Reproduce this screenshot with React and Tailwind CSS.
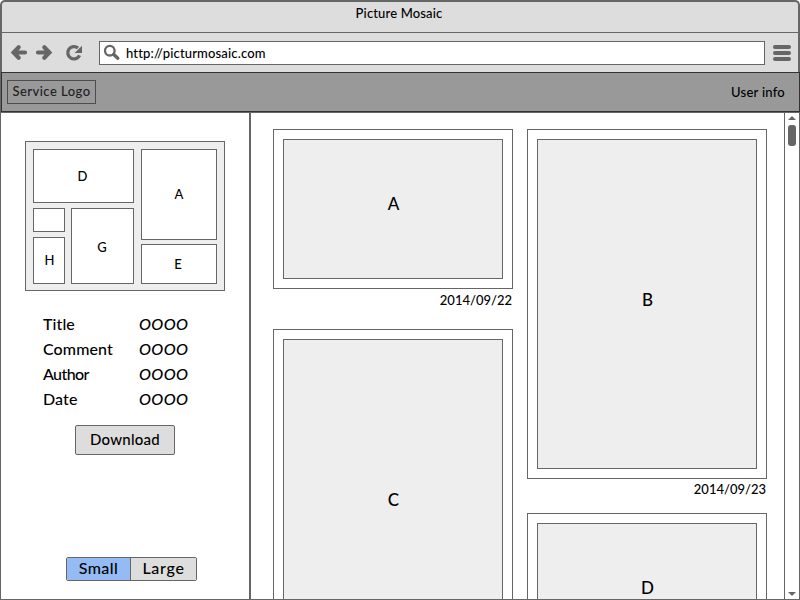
function Toolbar() {
  return (
    <div className="flex h-[39px] items-start bg-[#ddd] pt-2">
      <svg className="mt-[2px] ml-[8px] h-[20px] w-[76px] shrink-0" viewBox="0 0 76 20" fill="none" stroke="#666">
        <path d="M3.5 9.5H15M8.7 4.2L3.6 9.5L8.7 14.8" strokeWidth="4.2" strokeLinecap="round" strokeLinejoin="miter" />
        <path d="M28 9.5H39.5M34.3 4.2L39.4 9.5L34.3 14.8" strokeWidth="4.2" strokeLinecap="round" strokeLinejoin="miter" />
        <path d="M68 5A6.2 6.2 0 1 0 69.6 12.4" strokeWidth="3.3" />
        <path d="M72 2.8V10H64.6Z" fill="#666" stroke="none" />
      </svg>
      <div className="ml-[13px] flex h-6 w-[666px] shrink-0 items-center border border-[#666] bg-white">
        <svg className="ml-[3px] h-[18px] w-[18px]" viewBox="0 0 18 18" fill="none" stroke="#666">
          <circle cx="6.8" cy="6.7" r="4.8" strokeWidth="2.3" />
          <path d="M10.8 10.4L14.8 14.2" strokeWidth="3.4" strokeLinecap="round" />
        </svg>
        <span className="ml-[5px] text-[13px] leading-none font-medium tracking-[0.15px]">http://picturmosaic.com</span>
      </div>
      <div className="mt-[4px] ml-[8px] flex w-[18px] flex-col gap-[2px]">
        <div className="h-1 rounded-full bg-[#666]" />
        <div className="h-1 rounded-full bg-[#666]" />
        <div className="h-1 rounded-full bg-[#666]" />
      </div>
    </div>
  );
}

function Tile({ className, children }) {
  return (
    <div className={`flex items-center justify-center border border-[#666] bg-white text-[13px] leading-none font-medium ${className}`}>
      {children}
    </div>
  );
}

function Mosaic() {
  return (
    <div className="mt-[28px] ml-6 flex h-[150px] w-[200px] gap-[7px] border border-[#666] bg-[#eee] p-[7px] pb-[6px]">
      <div className="flex w-[101px] flex-col gap-[5px]">
        <Tile className="h-[54px] pr-[2px]">D</Tile>
        <div className="flex gap-[6px]">
          <div className="flex w-8 flex-col gap-[5px]">
            <Tile className="h-6" />
            <Tile className="h-[47px] pl-[1px]">H</Tile>
          </div>
          <Tile className="h-[76px] w-[63px] pt-[2px] pr-[1px]">G</Tile>
        </div>
      </div>
      <div className="flex w-[76px] flex-col gap-1">
        <Tile className="h-[91px]">A</Tile>
        <Tile className="h-10 pr-[2px]">E</Tile>
      </div>
    </div>
  );
}

const fields = [
  ["Title", "tracking-[0.1px]"],
  ["Comment", "tracking-[0.1px]"],
  ["Author", "tracking-[-0.6px]"],
  ["Date", "tracking-[0.1px]"],
];

function Sidebar() {
  return (
    <div className="w-[250px] shrink-0 border-r-2 border-[#666]">
      <Mosaic />
      <div className="mt-[20px] ml-[42px]">
        {fields.map(([label, tracking]) => (
          <div key={label} className="flex h-[25px] items-center pt-[1px] text-[16px] leading-none font-medium">
            <span className={`w-[96px] ${tracking}`}>{label}</span>
            <span className="tracking-[0.4px] italic">OOOO</span>
          </div>
        ))}
      </div>
      <button className="mt-[14px] ml-[74px] flex h-[30px] w-[100px] items-center justify-center rounded-[2px] border border-[#666] bg-[#ddd] pb-[2px] text-[15px] leading-none font-medium tracking-[0.25px]">
        Download
      </button>
      <div className="mt-[102px] ml-[65px] flex h-6 w-[131px] rounded-[2px] border border-[#666] text-[16px] leading-none font-medium">
        <button className="flex w-[63px] items-center justify-center rounded-l-[1px] bg-[#94bbf4] pb-[2px] tracking-[0.4px]">Small</button>
        <button className="flex flex-1 items-center justify-center rounded-r-[1px] border-l border-[#666] bg-[#ddd] pb-[2px] tracking-[0.7px]">Large</button>
      </div>
    </div>
  );
}

function Picture({ label, className, labelClassName = "pb-[9px]" }) {
  return (
    <div className={`w-60 shrink-0 border border-[#666] bg-white p-[9px] ${className}`}>
      <div className={`flex h-full items-center justify-center border border-[#666] bg-[#eee] pl-[1px] text-[17px] leading-none font-medium ${labelClassName}`}>
        {label}
      </div>
    </div>
  );
}

function Stamp({ className, children }) {
  return (
    <div className={`h-5 shrink-0 pr-[1px] text-right text-[13px] leading-4 font-medium ${className}`}>
      {children}
    </div>
  );
}

function Gallery() {
  return (
    <div className="flex flex-1 gap-[14px] overflow-hidden pt-4 pl-[22px]">
      <div className="flex w-60 flex-col">
        <Picture label="A" className="h-40" labelClassName="pb-[12px]" />
        <Stamp className="pt-[3px]">2014/09/22</Stamp>
        <Picture label="C" className="mt-5 h-[350px]" />
      </div>
      <div className="flex w-60 flex-col">
        <Picture label="B" className="h-[350px]" />
        <Stamp className="pt-[2px]">2014/09/23</Stamp>
        <Picture label="D" className="mt-[14px] h-40" labelClassName="pb-[12px]" />
      </div>
    </div>
  );
}

function Scrollbar() {
  return (
    <div className="flex w-[15px] shrink-0 flex-col items-center border-l border-[#666] pt-[3px]">
      <svg className="h-1 w-2" viewBox="0 0 8 4"><path d="M0 4L4 0L8 4Z" fill="#666" /></svg>
      <div className="mt-[5px] h-[21px] w-2 rounded-[3px] bg-[#666]" />
      <svg className="mt-auto mb-[3px] h-1 w-2" viewBox="0 0 8 4"><path d="M0 0L4 4L8 0Z" fill="#666" /></svg>
    </div>
  );
}

export default function App() {
  return (
    <div className="flex h-[600px] w-[800px] flex-col overflow-hidden bg-white font-['Lato',sans-serif] text-black">
      <div className="h-[72px] shrink-0 rounded-t-[5px] border-x-2 border-t-2 border-[#666] bg-[#ddd]">
        <div className="h-[31px] border-b border-[#666] pt-[4px] pr-[2px] text-center text-[13px] leading-[14px] font-medium tracking-[0.15px]">Picture Mosaic</div>
        <Toolbar />
      </div>
      <div className="h-10 shrink-0 border-l border-[#666]">
        <div className="flex h-10 items-center justify-between border border-[#333] bg-[#999] pr-[14px] pl-[5px] text-[13px] leading-none font-medium">
          <div className="flex h-6 w-[89px] items-center justify-center border border-[#4d4d4d] pb-[2px] tracking-[0.45px] text-[#222]">Service Logo</div>
          <div className="tracking-[0.25px]">User info</div>
        </div>
      </div>
      <div className="flex min-h-0 flex-1 border border-[#666]">
        <Sidebar />
        <Gallery />
        <Scrollbar />
      </div>
    </div>
  );
}
